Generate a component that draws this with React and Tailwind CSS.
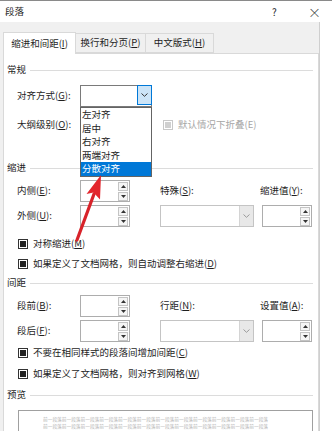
import React from 'react';

const Ul = ({ children }) => <span className="underline">{children}</span>;

function Spin() {
  return (
    <div className="w-[50px] h-[22px] border border-[#adadad] bg-white flex justify-end items-center pr-[1px]">
      <div className="flex flex-col gap-[1px]">
        <div className="w-[10px] h-[9px] border border-[#c4c4c4] bg-[#f5f5f5] flex items-center justify-center">
          <svg width="5" height="3" viewBox="0 0 5 3"><path d="M0 3 L2.5 0 L5 3 Z" fill="#333" /></svg>
        </div>
        <div className="w-[10px] h-[9px] border border-[#c4c4c4] bg-[#f5f5f5] flex items-center justify-center">
          <svg width="5" height="3" viewBox="0 0 5 3"><path d="M0 0 L2.5 3 L5 0 Z" fill="#333" /></svg>
        </div>
      </div>
    </div>
  );
}

function Chevron({ color = '#555' }) {
  return (
    <svg width="7" height="4" viewBox="0 0 7 4">
      <path d="M0.5 0.5 L3.5 3.3 L6.5 0.5" fill="none" stroke={color} strokeWidth="1" />
    </svg>
  );
}

function DisabledSelect() {
  return (
    <div className="w-[94px] h-[22px] border border-[#c4c4c4] bg-white flex justify-end">
      <div className="w-[14px] h-full bg-[#e8e8e8] border-l border-[#d4d4d4] flex items-center justify-center">
        <Chevron color="#9a9a9a" />
      </div>
    </div>
  );
}

function Check({ children, disabled }) {
  return (
    <div className={`flex items-center gap-[5px] ${disabled ? 'text-[#a6a6a6]' : ''}`}>
      <div className={`w-[10px] h-[10px] border p-[1px] bg-white ${disabled ? 'border-[#c8c8c8]' : 'border-[#333]'}`}>
        <div className={`w-full h-full ${disabled ? 'bg-[#d0d0d0]' : 'bg-[#222]'}`} />
      </div>
      <span>{children}</span>
    </div>
  );
}

function Section({ title, className }) {
  return (
    <div className={`flex items-center h-[18px] pl-[3px] pr-[5px] gap-[4px] ${className}`}>
      <span>{title}</span>
      <div className="flex-1 h-px bg-[#dcdcdc]" />
    </div>
  );
}

const previewLine = '前一段落前一段落前一段落前一段落前一段落前一段落前一段落前一段落前一段落前一段落前一段落前一段落';

export default function App() {
  const items = ['左对齐', '居中', '右对齐', '两端对齐', '分散对齐'];
  return (
    <div className="relative w-[332px] h-[431px] overflow-hidden bg-white text-[9.5px] text-[#1e1e1e] font-['Noto_Sans_CJK_SC','Microsoft_YaHei',sans-serif] leading-none">
      {/* title bar */}
      <div className="h-[22px] border-t border-[#8a8a8a] flex items-center pl-[5px]">
        <span className="flex-1">段落</span>
        <span className="w-[36px] text-[10px]">?</span>
        <span className="w-[24px] text-[13px] font-light text-[#333]">×</span>
      </div>

      <div className="flex h-[409px]">
        <div className="w-[320px] bg-[#f0f0f0] border-r border-[#cfcfcf] pl-[3px] pt-[9px]">
          {/* tabs */}
          <div className="flex items-end h-[22px]">
            <div className="h-[22px] w-[73px] bg-white border border-b-0 border-[#d9d9d9] flex items-center justify-center relative z-10 translate-y-px">
              缩进和间距(<Ul>I</Ul>)
            </div>
            <div className="h-[20px] w-[70px] border border-l-0 border-[#d9d9d9] flex items-center justify-center">
              换行和分页(<Ul>P</Ul>)
            </div>
            <div className="h-[20px] w-[68px] border border-l-0 border-[#d9d9d9] flex items-center justify-center">
              中文版式(<Ul>H</Ul>)
            </div>
          </div>

          {/* panel */}
          <div className="w-[316px] h-[400px] bg-white border border-[#d9d9d9] flex flex-col">
            <Section title="常规" className="mt-[7px]" />

            <div className="mt-[6px] h-[22px] flex items-center pl-[13px]">
              <span className="w-[63px]">对齐方式(<Ul>G</Ul>):</span>
              <div className="relative w-[72px] h-[22px] border border-[#7a7a7a] bg-white flex justify-end">
                <div className="w-[15px] h-full bg-[#cce4f7] border border-[#0078d7] -my-px -mr-px h-[22px] flex items-center justify-center">
                  <Chevron color="#333" />
                </div>
                <div className="absolute left-[-1px] top-[21px] w-[72px] border border-[#646464] bg-white z-20 flex flex-col">
                  {items.map((t, i) => (
                    <div
                      key={t}
                      className={`h-[13.5px] flex items-center pl-[1px] ${i === 4 ? 'bg-[#0078d7] text-white' : ''}`}
                    >
                      {t}
                    </div>
                  ))}
                </div>
              </div>
            </div>

            <div className="mt-[8px] h-[20px] flex items-center pl-[13px]">
              <span className="w-[63px]">大纲级别(<Ul>O</Ul>):</span>
              <div className="w-[72px]" />
              <div className="ml-[11px]">
                <Check disabled>默认情况下折叠(E)</Check>
              </div>
            </div>

            <Section title="缩进" className="mt-[24px]" />

            <div className="mt-[3px] h-[22px] flex items-center pl-[13px]">
              <span className="w-[63px]">内侧(<Ul>E</Ul>):</span>
              <Spin />
              <span className="ml-[30px] w-[100px]">特殊(<Ul>S</Ul>):</span>
              <span>缩进值(<Ul>Y</Ul>):</span>
            </div>

            <div className="mt-[3px] h-[22px] flex items-center pl-[13px]">
              <span className="w-[63px]">外侧(<Ul>U</Ul>):</span>
              <Spin />
              <div className="ml-[30px]"><DisabledSelect /></div>
              <div className="ml-[8px]"><Spin /></div>
            </div>

            <div className="mt-[8px] h-[18px] flex items-center pl-[14px]">
              <Check>对称缩进(<Ul>M</Ul>)</Check>
            </div>
            <div className="mt-[2px] h-[18px] flex items-center pl-[14px]">
              <Check>如果定义了文档网格，则自动调整右缩进(<Ul>D</Ul>)</Check>
            </div>

            <Section title="间距" className="mt-[1px]" />

            <div className="mt-[3px] h-[22px] flex items-center pl-[13px]">
              <span className="w-[63px]">段前(<Ul>B</Ul>):</span>
              <Spin />
              <span className="ml-[30px] w-[100px]">行距(<Ul>N</Ul>):</span>
              <span>设置值(<Ul>A</Ul>):</span>
            </div>

            <div className="mt-[3px] h-[22px] flex items-center pl-[13px]">
              <span className="w-[63px]">段后(<Ul>F</Ul>):</span>
              <Spin />
              <div className="ml-[30px]"><DisabledSelect /></div>
              <div className="ml-[8px]"><Spin /></div>
            </div>

            <div className="mt-[2px] h-[18px] flex items-center pl-[14px]">
              <Check>不要在相同样式的段落间增加间距(<Ul>C</Ul>)</Check>
            </div>
            <div className="mt-[3px] h-[18px] flex items-center pl-[14px]">
              <Check>如果定义了文档网格，则对齐到网格(<Ul>W</Ul>)</Check>
            </div>

            <Section title="预览" className="mt-[3px]" />

            <div className="mt-[6px] ml-[14px] w-[295px] h-[40px] border border-[#a0a0a0] bg-white pt-[5px] pl-[24px] overflow-hidden">
              <div className="w-[230px] overflow-hidden whitespace-nowrap text-[4.7px] leading-[7px] text-[#b4b4b4]">
                {previewLine}
              </div>
              <div className="w-[230px] overflow-hidden whitespace-nowrap text-[4.7px] leading-[7px] text-[#b4b4b4]">
                {previewLine}
              </div>
            </div>
          </div>
        </div>
        <div className="flex-1 bg-white" />
      </div>

      {/* red annotation arrow */}
      <svg className="absolute left-0 top-0 pointer-events-none z-30" width="332" height="431" viewBox="0 0 332 431">
        <line x1="77" y1="240" x2="94" y2="194" stroke="#d8232a" strokeWidth="3.2" strokeLinecap="round" />
        <path d="M101 175 L86.5 194 L93.5 192.5 L100 199.5 Z" fill="#e3262d" />
      </svg>
    </div>
  );
}
